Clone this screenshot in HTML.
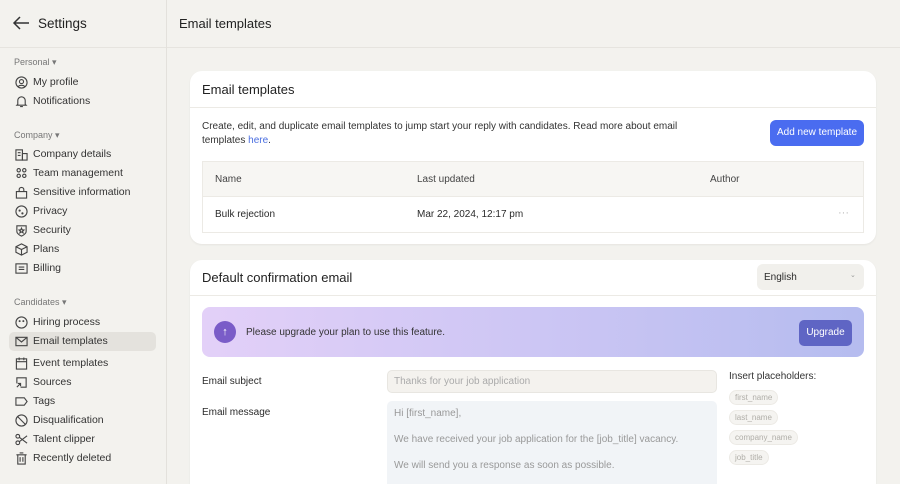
<!DOCTYPE html>
<html><head><meta charset="utf-8"><style>
*{box-sizing:border-box;margin:0;padding:0}
html,body{width:900px;height:484px;overflow:hidden}
body{background:#f3f2ee;font-family:"Liberation Sans",sans-serif;color:#2b2b2b;position:relative}
.a{position:absolute;white-space:nowrap}
.side{position:absolute;left:0;top:0;width:167px;height:484px;border-right:1px solid #e3e1dc}
.sec{position:absolute;left:14px;font-size:9px;color:#777}
.it{position:absolute;left:15px;font-size:10.5px;color:#333;display:flex;align-items:center;gap:5px;height:16px}
.it svg{width:13px;height:13px;fill:none;stroke:#444;stroke-width:1.2}
.card{position:absolute;left:190px;width:686px;background:#fff;border-radius:12px;box-shadow:0 1px 2px rgba(0,0,0,.06)}
.t11{font-size:10px}
.chip{position:absolute;left:729px;font-size:8px;color:#b0aea8;background:#f5f4f1;border:1px solid #eceae5;border-radius:8px;padding:2px 5px}
</style></head><body>
<div class="side">
<svg class="a" style="left:12px;top:14px" width="18" height="18" viewBox="0 0 18 18" fill="none" stroke="#333" stroke-width="1.5"><path d="M17 9H2M8 3L2 9l6 6"/></svg>
<div class="a" style="left:38px;top:16px;font-size:13.5px;color:#222">Settings</div>
<div class="a" style="left:0;top:47px;width:166px;border-top:1px solid #e6e4df"></div>
<div class="sec" style="top:57px">Personal ▾</div>
<div class="it" style="top:74px"><svg viewBox="0 0 14 14"><circle cx="7" cy="7" r="6"/><circle cx="7" cy="6" r="2.2"/><path d="M3.5 11.5c1-2 6-2 7 0"/></svg>My profile</div>
<div class="it" style="top:93px"><svg viewBox="0 0 14 14"><path d="M3 10V6a4 4 0 018 0v4l1 1H2zM5.5 12.5h3"/></svg>Notifications</div>
<div class="sec" style="top:130px">Company ▾</div>
<div class="it" style="top:146px"><svg viewBox="0 0 14 14"><rect x="1" y="2" width="7" height="11"/><rect x="8" y="6" width="5" height="7"/><path d="M3 5h3M3 8h3"/></svg>Company details</div>
<div class="it" style="top:165px"><svg viewBox="0 0 14 14"><circle cx="4" cy="3.5" r="1.8"/><circle cx="10" cy="3.5" r="1.8"/><circle cx="4" cy="9.5" r="1.8"/><circle cx="10" cy="9.5" r="1.8"/></svg>Team management</div>
<div class="it" style="top:184px"><svg viewBox="0 0 14 14"><rect x="1.5" y="6" width="11" height="7"/><path d="M4.5 6V4a2.5 2.5 0 015 0v2"/></svg>Sensitive information</div>
<div class="it" style="top:203px"><svg viewBox="0 0 14 14"><circle cx="7" cy="7" r="6"/><circle cx="5" cy="6" r=".6"/><circle cx="8" cy="9" r=".6"/></svg>Privacy</div>
<div class="it" style="top:222px"><svg viewBox="0 0 14 14"><path d="M2 2h10v6c0 3-5 5-5 5S2 11 2 8z"/><path d="M7 4.5l.8 1.8 1.8.2-1.4 1.2.5 1.8L7 8.5l-1.7 1 .5-1.8-1.4-1.2 1.8-.2z"/></svg>Security</div>
<div class="it" style="top:241px"><svg viewBox="0 0 14 14"><path d="M7 1l6 3v6l-6 3-6-3V4zM1 4l6 3 6-3M7 7v6"/></svg>Plans</div>
<div class="it" style="top:260px"><svg viewBox="0 0 14 14"><rect x="1" y="2" width="12" height="10"/><path d="M4 5.5h6M4 8h6"/></svg>Billing</div>
<div class="sec" style="top:297px">Candidates ▾</div>
<div class="it" style="top:314px"><svg viewBox="0 0 14 14"><circle cx="7" cy="7" r="6"/><circle cx="5" cy="5.5" r=".5"/><circle cx="9" cy="5.5" r=".5"/></svg>Hiring process</div>
<div class="a" style="left:9px;top:332px;width:147px;height:19px;background:#e4e2dd;border-radius:5px"></div>
<div class="it" style="top:333px"><svg viewBox="0 0 14 14"><rect x="1" y="2.5" width="12" height="9"/><path d="M1 2.5l6 5 6-5"/></svg>Email templates</div>
<div class="it" style="top:355px"><svg viewBox="0 0 14 14"><rect x="1.5" y="2" width="11" height="11"/><path d="M1.5 5h11M4.5 .5v3M9.5 .5v3"/></svg>Event templates</div>
<div class="it" style="top:374px"><svg viewBox="0 0 14 14"><path d="M2 8V2h10v10H6M2 12l4-4M3 8h3v3"/></svg>Sources</div>
<div class="it" style="top:393px"><svg viewBox="0 0 14 14"><path d="M1 3h9l3 4-3 4H1z"/></svg>Tags</div>
<div class="it" style="top:412px"><svg viewBox="0 0 14 14"><circle cx="7" cy="7" r="6"/><path d="M3 3l8 8"/></svg>Disqualification</div>
<div class="it" style="top:431px"><svg viewBox="0 0 14 14"><circle cx="3" cy="3.5" r="2"/><circle cx="3" cy="10.5" r="2"/><path d="M4.5 4.5L13 11M4.5 9.5L13 3"/></svg>Talent clipper</div>
<div class="it" style="top:450px"><svg viewBox="0 0 14 14"><path d="M1.5 3h11M3 3v10h8V3M5 1h4M5.5 5.5v5M8.5 5.5v5"/></svg>Recently deleted</div>
</div>
<div class="a" style="left:179px;top:16px;font-size:13px;color:#222">Email templates</div>
<div class="a" style="left:167px;top:47px;width:733px;border-top:1px solid #e6e4df"></div>

<div class="card" style="top:71px;height:173px">
<div class="a" style="left:12px;top:11px;font-size:13px;color:#222">Email templates</div>
<div class="a" style="left:0;top:36px;width:686px;border-top:1px solid #eceae5"></div>
<div class="a t11" style="left:12px;top:49px;line-height:14px;color:#333">Create, edit, and duplicate email templates to jump start your reply with candidates. Read more about email<br>templates <span style="color:#4a6ee0">here</span>.</div>
<div class="a" style="left:580px;top:49px;width:94px;height:26px;background:#4a6cf0;border-radius:6px;color:#fff;font-size:10px;line-height:26px;text-align:center">Add new template</div>
<div class="a" style="left:12px;top:90px;width:662px;height:72px;border:1px solid #eceae5">
<div style="height:35px;background:#f7f6f3;border-bottom:1px solid #eceae5"></div>
</div>
<div class="a t11" style="left:25px;top:103px;color:#444">Name</div>
<div class="a t11" style="left:227px;top:103px;color:#444">Last updated</div>
<div class="a t11" style="left:520px;top:103px;color:#444">Author</div>
<div class="a t11" style="left:25px;top:138px">Bulk rejection</div>
<div class="a t11" style="left:227px;top:138px">Mar 22, 2024, 12:17 pm</div>
<div class="a" style="left:648px;top:136px;color:#bbb;font-size:11px">···</div>
</div>

<div class="card" style="top:260px;height:240px">
<div class="a" style="left:12px;top:10px;font-size:13px;color:#222">Default confirmation email</div>
<div class="a" style="left:567px;top:4px;width:107px;height:26px;background:#f1f0ec;border-radius:6px"></div>
<div class="a t11" style="left:574px;top:12px">English</div>
<div class="a" style="left:660px;top:11px;font-size:7px;color:#999">⌄</div>
<div class="a" style="left:0;top:35px;width:686px;border-top:1px solid #eceae5"></div>
<div class="a" style="left:12px;top:47px;width:662px;height:50px;border-radius:8px;background:linear-gradient(90deg,#e3d0f8,#c8c4f3 60%,#b5bcef)"></div>
<div class="a" style="left:24px;top:61px;width:22px;height:22px;border-radius:50%;background:#7a5cc8;color:#fff;font-size:11px;text-align:center;line-height:22px">↑</div>
<div class="a t11" style="left:56px;top:67px;color:#333">Please upgrade your plan to use this feature.</div>
<div class="a" style="left:609px;top:60px;width:53px;height:26px;background:#5f65c4;border-radius:5px;color:#fff;font-size:10px;line-height:26px;text-align:center">Upgrade</div>
<div class="a t11" style="left:12px;top:116px">Email subject</div>
<div class="a" style="left:197px;top:110px;width:330px;height:23px;background:#f4f2ee;border:1px solid #e8e6e1;border-radius:5px"></div>
<div class="a t11" style="left:204px;top:116px;color:#aaa">Thanks for your job application</div>
<div class="a t11" style="left:12px;top:147px">Email message</div>
<div class="a" style="left:197px;top:141px;width:330px;height:100px;background:#f1f4f7;border-radius:5px"></div>
<div class="a t11" style="left:204px;top:148px;color:#999">Hi [first_name],</div>
<div class="a t11" style="left:204px;top:174px;color:#999">We have received your job application for the [job_title] vacancy.</div>
<div class="a t11" style="left:204px;top:200px;color:#999">We will send you a response as soon as possible.</div>
<div class="a t11" style="left:539px;top:111px;color:#333">Insert placeholders:</div>
</div>
<div class="chip" style="top:390px">first_name</div>
<div class="chip" style="top:410px">last_name</div>
<div class="chip" style="top:430px">company_name</div>
<div class="chip" style="top:450px">job_title</div>
</body></html>
